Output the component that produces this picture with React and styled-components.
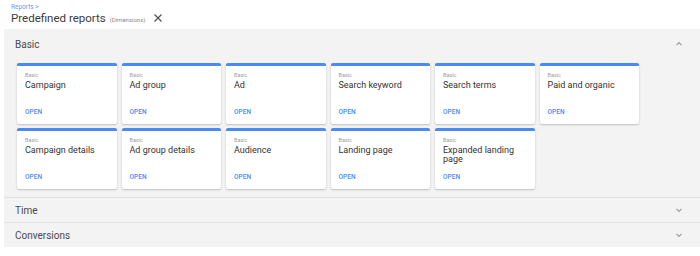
import styled, { createGlobalStyle } from 'styled-components';

const GlobalStyle = createGlobalStyle`
    body {
        margin: 0;
        background: #fff;
        font-family: Roboto, "Liberation Sans", sans-serif;
    }
`;

const Page = styled.div`
    width: 700px;
    height: 256px;
    overflow: hidden;
`;

const TopBar = styled.header`
    padding: 4px 10px 0 11px;
    height: 26px;
    box-sizing: border-box;
`;

const Crumb = styled.div`
    font-size: 6.5px;
    line-height: 7px;
    color: #6c9cf0;
`;

const TitleRow = styled.div`
    display: flex;
    align-items: center;
    gap: 4px;
    height: 14px;
`;

const Title = styled.h1`
    margin: 0;
    font-size: 11.5px;
    font-weight: 400;
    color: #3c3c3c;
`;

const Dim = styled.span`
    font-size: 6px;
    color: #8a8a8a;
    margin-top: 2px;
`;

const Close = styled.svg`
    width: 10px;
    height: 10px;
    margin-left: 4px;
    stroke: #555;
    stroke-width: 1.3;
`;

const Panel = styled.section`
    margin: 3px 0 0 4px;
    background: #f3f3f3;
`;

const SectionHead = styled.div`
    display: flex;
    align-items: center;
    justify-content: space-between;
    height: ${p => p.$h}px;
    padding: 0 17px 0 11px;
    font-size: 10px;
    color: #4a4a4a;
    border-top: ${p => (p.$divider ? '1px solid #e2e2e2' : 'none')};
    box-sizing: border-box;
`;

const Chevron = styled.svg`
    width: 8px;
    height: 8px;
    fill: none;
    stroke: #9a9a9a;
    stroke-width: 1.2;
`;

const Grid = styled.div`
    display: grid;
    grid-template-columns: repeat(6, 99.5px);
    column-gap: 5px;
    row-gap: 4px;
    padding: 4px 0 8px 13px;
`;

const Card = styled.div`
    height: 61px;
    background: #fff;
    border-top: 3px solid #4a8af4;
    border-radius: 2px;
    box-shadow: 0 1px 2px rgba(0, 0, 0, 0.22);
    box-sizing: border-box;
    padding: 5px 8px 0;
    display: flex;
    flex-direction: column;
`;

const Kind = styled.div`
    font-size: 5.5px;
    line-height: 8px;
    color: #9e9e9e;
`;

const CardTitle = styled.div`
    font-size: 9px;
    line-height: 9px;
    color: #333;
    margin-top: 2px;
    height: 20px;
`;

const Open = styled.div`
    margin-top: auto;
    margin-bottom: 8px;
    font-size: 6.5px;
    font-weight: 500;
    color: #4a8af4;
    letter-spacing: 0.1px;
`;

const reports = [
    'Campaign',
    'Ad group',
    'Ad',
    'Search keyword',
    'Search terms',
    'Paid and organic',
    'Campaign details',
    'Ad group details',
    'Audience',
    'Landing page',
    'Expanded landing page',
];

const Down = () => (
    <Chevron viewBox="0 0 8 8">
        <path d="M1.5 2.8 L4 5.3 L6.5 2.8" />
    </Chevron>
);

const App = () => {
    return (
        <Page>
            <GlobalStyle />
            <TopBar>
                <Crumb>Reports &gt;</Crumb>
                <TitleRow>
                    <Title>Predefined reports</Title>
                    <Dim>(Dimensions)</Dim>
                    <Close viewBox="0 0 10 10">
                        <path d="M1.5 1.5 L8.5 8.5 M8.5 1.5 L1.5 8.5" />
                    </Close>
                </TitleRow>
            </TopBar>
            <Panel>
                <SectionHead $h={30}>
                    Basic
                    <Chevron viewBox="0 0 8 8">
                        <path d="M1.5 5.2 L4 2.7 L6.5 5.2" />
                    </Chevron>
                </SectionHead>
                <Grid>
                    {reports.map(r => (
                        <Card key={r}>
                            <Kind>Basic</Kind>
                            <CardTitle>{r}</CardTitle>
                            <Open>OPEN</Open>
                        </Card>
                    ))}
                </Grid>
                <SectionHead $h={25} $divider>
                    Time
                    <Down />
                </SectionHead>
                <SectionHead $h={25} $divider>
                    Conversions
                    <Down />
                </SectionHead>
            </Panel>
        </Page>
    );
};

export default App;
